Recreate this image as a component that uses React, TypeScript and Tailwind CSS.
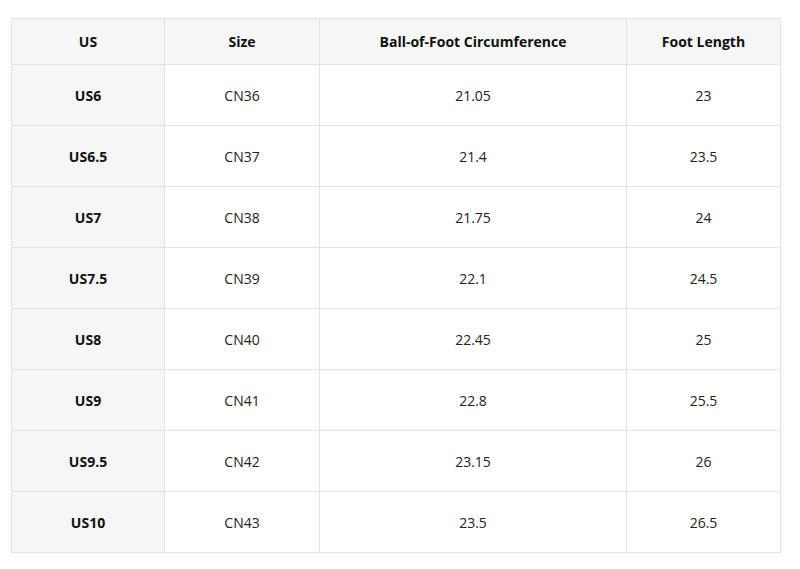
import React from 'react';

const rows = [
  ['US6', 'CN36', '21.05', '23'],
  ['US6.5', 'CN37', '21.4', '23.5'],
  ['US7', 'CN38', '21.75', '24'],
  ['US7.5', 'CN39', '22.1', '24.5'],
  ['US8', 'CN40', '22.45', '25'],
  ['US9', 'CN41', '22.8', '25.5'],
  ['US9.5', 'CN42', '23.15', '26'],
  ['US10', 'CN43', '23.5', '26.5'],
];

const App: React.FC = () => {
  return (
    <div className="w-[800px] h-[569px] bg-white pt-[18px] pl-[11px]" style={{ fontFamily: '"Open Sans", "Noto Sans", sans-serif' }}>
      <table className="border-collapse table-fixed w-[769px] text-[14px] text-[#222] shadow-[0_2px_6px_rgba(0,0,0,0.04)]">
        <colgroup>
          <col className="w-[153px]" />
          <col className="w-[155px]" />
          <col className="w-[307px]" />
          <col className="w-[154px]" />
        </colgroup>
        <thead>
          <tr className="h-[46px] bg-[#f6f6f6]">
            <th className="border border-[#e3e3e3] font-bold text-[#111] pb-[1px]">US</th>
            <th className="border border-[#e3e3e3] font-bold text-[#111] pb-[1px]">Size</th>
            <th className="border border-[#e3e3e3] font-bold text-[#111] pb-[1px]">Ball-of-Foot Circumference</th>
            <th className="border border-[#e3e3e3] font-bold text-[#111] pb-[1px]">Foot Length</th>
          </tr>
        </thead>
        <tbody>
          {rows.map((r) => (
            <tr key={r[0]} className="h-[61px]">
              <td className="border border-[#e3e3e3] bg-[#f6f6f6] text-center font-bold text-[#111]">{r[0]}</td>
              <td className="border border-[#e3e3e3] text-center">{r[1]}</td>
              <td className="border border-[#e3e3e3] text-center">{r[2]}</td>
              <td className="border border-[#e3e3e3] text-center">{r[3]}</td>
            </tr>
          ))}
        </tbody>
      </table>
    </div>
  );
};

export default App;
